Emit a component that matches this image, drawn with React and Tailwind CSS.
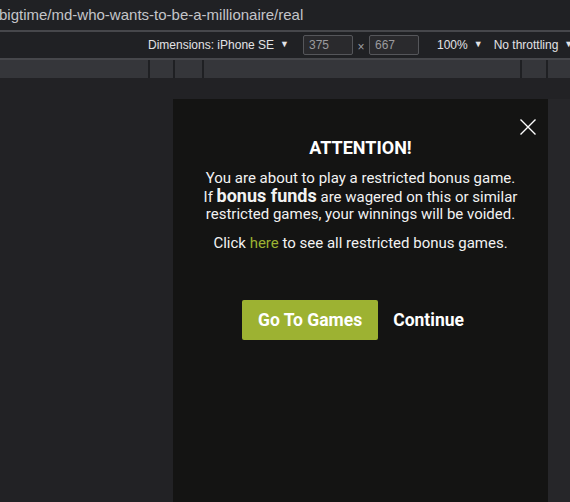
const App = () => {
  return (
    <div className="w-[570px] h-[502px] overflow-hidden flex flex-col bg-[#222225] font-['Liberation_Sans',Arial,sans-serif]">
      {/* url bar */}
      <div className="h-[30px] shrink-0 bg-[#202124] flex items-center text-[15px] text-[#c4c5c9] whitespace-nowrap">
        <span className="-ml-px">bigtime/md-who-wants-to-be-a-millionaire/real</span>
      </div>
      <div className="h-[2px] shrink-0 bg-[#46474b]"></div>

      {/* responsive toolbar */}
      <div className="h-[26px] shrink-0 bg-[#202124] flex items-center text-[12px] text-[#e3e3e6] whitespace-nowrap overflow-hidden">
        <div className="shrink-0 ml-[148px] flex items-center gap-[6px]">
          Dimensions: iPhone SE <span className="text-[9px]">▼</span>
        </div>
        <input
          readOnly
          value="375"
          className="shrink-0 ml-[14px] w-[50px] h-[20px] bg-[#2a2a2d] border border-[#55565a] rounded-[2px] px-[5px] text-[12px] text-[#9a9a9e] outline-none"
        />
        <span className="shrink-0 w-[16px] text-center text-[#a0a0a4] mt-[3px]">×</span>
        <input
          readOnly
          value="667"
          className="shrink-0 w-[50px] h-[20px] bg-[#2a2a2d] border border-[#55565a] rounded-[2px] px-[5px] text-[12px] text-[#9a9a9e] outline-none"
        />
        <div className="shrink-0 ml-[18px] flex items-center gap-[6px]">
          100% <span className="text-[9px]">▼</span>
        </div>
        <div className="shrink-0 ml-[11px] flex items-center gap-[6px]">
          No throttling <span className="text-[9px]">▼</span>
        </div>
      </div>
      <div className="h-[2px] shrink-0 bg-[#46474b]"></div>

      {/* ruler */}
      <div className="h-[18px] shrink-0 bg-[#35363a] flex">
        <div className="w-[148px]"></div>
        <div className="w-[25px] border-l-2 border-[#1f2023]"></div>
        <div className="w-[29px] border-l-2 border-[#1f2023]"></div>
        <div className="w-[318px] border-l-2 border-[#1f2023]"></div>
        <div className="w-[26px] border-l-2 border-[#1f2023]"></div>
        <div className="flex-1 border-l-2 border-[#1f2023]"></div>
      </div>

      {/* viewport */}
      <div className="flex-1 flex">
        <div className="w-[173px] shrink-0"></div>
        <div className="w-[375px] shrink-0 mt-[21px] bg-[#141413] relative font-['Roboto',sans-serif] text-white text-center">
          <button className="absolute right-[12px] top-[20px]">
            <svg width="16" height="16" viewBox="0 0 16 16" fill="none" stroke="white" strokeWidth="1.4">
              <path d="M0.5 0.5 L15.5 15.5 M15.5 0.5 L0.5 15.5" />
            </svg>
          </button>
          <h2 className="pt-[37px] text-[18px] font-bold leading-[24px]">ATTENTION!</h2>
          <p className="mt-[10px] text-[15px] leading-[17px] text-[#f2f2f2]">
            You are about to play a restricted bonus game.
            <br />
            If <span className="text-[18px] font-bold">bonus funds</span> are wagered on this or similar
            <br />
            restricted games, your winnings will be voided.
          </p>
          <p className="mt-[12px] text-[15px] leading-[17px] text-[#f2f2f2]">
            Click <span className="text-[#9db232]">here</span> to see all restricted bonus games.
          </p>
          <div className="mt-[48px] flex justify-center items-center gap-[15px] pr-[15px]">
            <button className="h-[40px] px-[16px] bg-[#9db232] rounded-[2px] text-[17.5px] font-bold text-white">
              Go To Games
            </button>
            <button className="h-[40px] text-[17.5px] font-bold text-white">Continue</button>
          </div>
        </div>
        <div className="flex-1 mt-[21px] bg-[#262629]"></div>
      </div>
    </div>
  );
};

export default App;
